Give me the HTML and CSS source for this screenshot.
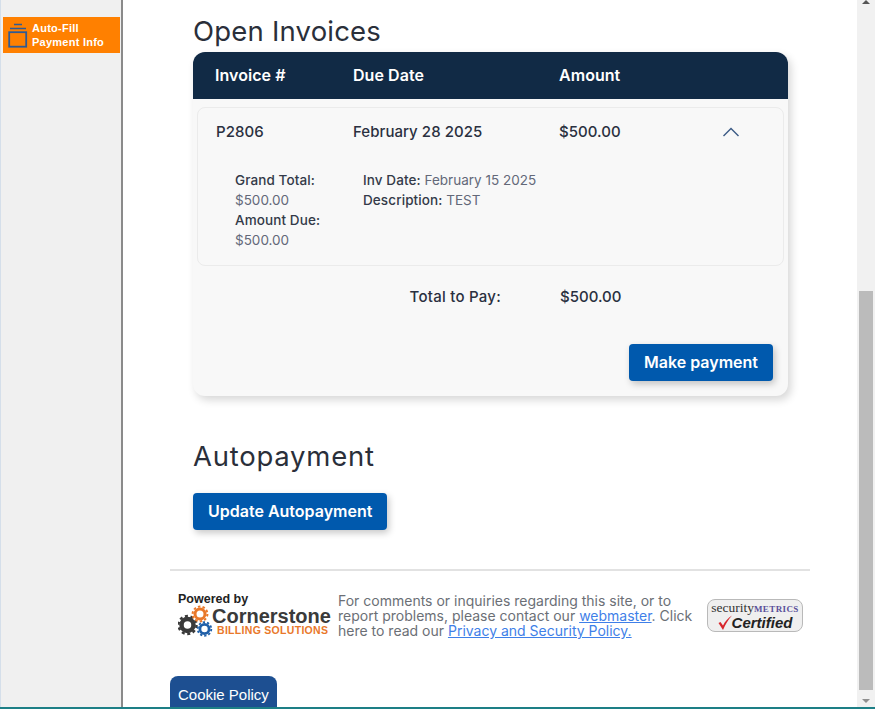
FILE: index.html
```html
<!DOCTYPE html>
<html lang="en">
<head>
    <meta charset="UTF-8">
    <meta name="viewport" content="width=device-width, initial-scale=1.0">
    <title>Open Invoices</title>
    <link rel="stylesheet" href="styles.css">
</head>
<body>
    <div class="window">
        <!-- Auto-fill side panel -->
        <aside class="sidebar">
            <div class="autofill">
                <svg class="autofill-icon" width="20" height="25" viewBox="0 0 20 25">
                    <path d="M6 1.5h8M2 5.5h16" stroke="#2f5a94" stroke-width="1.6" fill="none"/>
                    <rect x="1.2" y="9.2" width="17" height="14.5" stroke="#2f5a94" stroke-width="1.8" fill="none"/>
                </svg>
                <span>Auto-Fill<br>Payment Info</span>
            </div>
        </aside>

        <main class="content">
            <div class="section">
                <h2>Open Invoices</h2>
                <div class="invoice-card">
                    <div class="invoice-head row">
                        <div class="col-id">Invoice #</div>
                        <div class="col-date">Due Date</div>
                        <div class="col-amount">Amount</div>
                    </div>
                    <div class="invoice-item">
                        <div class="row item-row">
                            <div class="col-id">P2806</div>
                            <div class="col-date">February 28 2025</div>
                            <div class="col-amount">$500.00</div>
                            <svg class="chevron" width="18" height="10" viewBox="0 0 18 10">
                                <path d="M1.5 9L9 1.5L16.5 9" stroke="#3b5a85" stroke-width="1.4" fill="none"/>
                            </svg>
                        </div>
                        <div class="item-details">
                            <div class="details-left">
                                <b>Grand Total:</b>
                                <span>$500.00</span>
                                <b>Amount Due:</b>
                                <span>$500.00</span>
                            </div>
                            <div class="details-right">
                                <div><b>Inv Date:</b> <span>February 15 2025</span></div>
                                <div><b>Description:</b> <span>TEST</span></div>
                            </div>
                        </div>
                    </div>
                    <div class="total-row">
                        <div class="total-label">Total to Pay:</div>
                        <div class="total-value">$500.00</div>
                    </div>
                    <div class="card-actions">
                        <button class="btn" type="button">Make payment</button>
                    </div>
                </div>

                <h2 class="autopay-title">Autopayment</h2>
                <button class="btn" type="button">Update Autopayment</button>
            </div>

            <footer class="footer">
                <div class="powered">
                    <div class="powered-by">Powered by</div>
                    <div class="logo">
                        <svg width="51" height="34" viewBox="0 0 51 34">
                            <circle cx="9.5" cy="21" r="6" fill="none" stroke="#3a3a3a" stroke-width="4.5"/>
                            <circle cx="9.5" cy="21" r="9" fill="none" stroke="#3a3a3a" stroke-width="2.4" stroke-dasharray="3 2.65"/>
                            <circle cx="22" cy="10" r="5" fill="none" stroke="#e9782a" stroke-width="3"/>
                            <circle cx="22" cy="10" r="7.4" fill="none" stroke="#e9782a" stroke-width="2" stroke-dasharray="2.5 2.15"/>
                            <circle cx="26.5" cy="25" r="4.6" fill="none" stroke="#1f5fa8" stroke-width="2.8"/>
                            <circle cx="26.5" cy="25" r="6.8" fill="none" stroke="#1f5fa8" stroke-width="1.8" stroke-dasharray="2.3 2"/>
                        </svg>
                        <div class="logo-text">
                            <div class="logo-name">Cornerstone</div>
                            <div class="logo-sub">BILLING SOLUTIONS</div>
                        </div>
                    </div>
                </div>
                <p class="footer-text">For comments or inquiries regarding this site, or to report problems, please contact our <a href="#">webmaster</a>. Click here to read our <a href="#">Privacy and Security Policy.</a></p>
                <div class="badge">
                    <div class="badge-top">security<span>METRICS</span></div>
                    <div class="badge-bottom">
                        <svg width="14" height="15" viewBox="0 0 14 15">
                            <path d="M0.5 8L2.5 7L5 10.5C7 6.5 10 3 14 0.5C10.5 4.5 7.5 9 5 15Z" fill="#d8262c"/>
                        </svg>
                        <span>Certified</span>
                    </div>
                </div>
            </footer>

            <div class="cookie">Cookie Policy</div>
        </main>

        <!-- Page scrollbar -->
        <div class="scrollbar">
            <div class="arrow-up"></div>
            <div class="scroll-track">
                <div class="scroll-thumb"></div>
            </div>
            <div class="arrow-down"></div>
        </div>
    </div>
</body>
</html>
```

FILE: styles.css
```css
* {
    box-sizing: border-box;
}

html, body {
    height: 100%;
}

body {
    margin: 0;
    font-family: Inter, "Open Sans", sans-serif;
    background-color: #fff;
    color: #2c3240;
    overflow: hidden;
}

.window {
    display: flex;
    height: 709px;
    border-bottom: 2px solid #1d7f86;
    overflow: hidden;
}

.sidebar {
    width: 123px;
    flex-shrink: 0;
    padding: 17px 0 0 3px;
    background-color: #f0f0f0;
    border-left: 1px solid #d5dfea;
    border-right: 2px solid #8a8a8a;
}

.autofill {
    display: flex;
    align-items: center;
    gap: 4px;
    width: 117px;
    height: 36px;
    margin-left: -1px;
    padding-left: 5px;
    background-color: #ff8000;
    color: #fff;
    font-family: "Liberation Sans", Arial, sans-serif;
    font-size: 11px;
    font-weight: bold;
    line-height: 14.5px;
    letter-spacing: 0.25px;
}

.autofill-icon {
    flex-shrink: 0;
    margin-top: 1px;
}

.content {
    flex: 1;
    min-width: 0;
    padding-left: 47px;
}

.section {
    padding: 0 0 0 23px;
    width: 618px;
}

h2 {
    margin: 0;
    padding-top: 15px;
    height: 52px;
    font-size: 27.5px;
    line-height: 32px;
    font-weight: 400;
    color: #2a2f3a;
    letter-spacing: 0.2px;
}

.invoice-card {
    width: 595px;
    height: 344px;
    background-color: #f8f8f8;
    border-radius: 12px;
    box-shadow: 3px 4px 9px rgba(0, 0, 0, 0.16);
}

.row {
    display: flex;
    align-items: center;
}

.invoice-head {
    height: 47px;
    padding: 0 0 2px 22px;
    background-color: #112a45;
    border-radius: 12px 12px 0 0;
    color: #fff;
    font-size: 16px;
    font-weight: 600;
    letter-spacing: 0.05px;
}

.col-id {
    width: 138px;
}

.col-date {
    width: 206px;
}

.col-amount {
    width: 162px;
}

.invoice-item {
    height: 159px;
    margin: 8px 4px 0;
    background-color: #f8f8f8;
    border: 1px solid #ebebeb;
    border-radius: 8px;
}

.item-row {
    height: 47px;
    padding-left: 18px;
    font-size: 15px;
    font-weight: 500;
    color: #2a3040;
    letter-spacing: 0.05px;
}

.item-row .col-id {
    width: 137px;
}

.item-row .col-amount {
    width: 163px;
}

.item-details {
    display: flex;
    padding: 15px 0 0 37px;
    font-size: 13.5px;
    line-height: 20px;
}

.details-left {
    display: flex;
    flex-direction: column;
    width: 128px;
}

.item-details b {
    font-weight: 500;
    color: #333a48;
    letter-spacing: 0.1px;
}

.item-details span {
    color: #636878;
}

.total-row {
    display: flex;
    height: 60px;
    align-items: center;
    font-size: 15px;
    font-weight: 500;
    color: #2a3040;
}

.total-label {
    width: 308px;
    text-align: right;
    letter-spacing: 0.25px;
}

.total-value {
    margin-left: 59px;
}

.card-actions {
    display: flex;
    justify-content: flex-end;
    padding: 18px 15px 0 0;
}

.btn {
    height: 37px;
    padding: 0 15px 2px;
    border: none;
    border-radius: 4px;
    background-color: #0059ad;
    color: #fff;
    font-family: Inter, sans-serif;
    font-size: 16px;
    font-weight: 600;
    box-shadow: 2px 3px 7px rgba(0, 0, 0, 0.22);
    cursor: pointer;
}

.autopay-title {
    margin-top: 22px;
    height: 75px;
    padding-top: 22px;
    letter-spacing: 0.75px;
}

.footer {
    display: flex;
    align-items: flex-start;
    width: 640px;
    height: 107px;
    margin-top: 39px;
    padding: 22px 0 0 8px;
    border-top: 2px solid #e2e2e2;
}

.powered {
    width: 160px;
    flex-shrink: 0;
}

.powered-by {
    font-family: "Liberation Sans", Arial, sans-serif;
    font-size: 12.5px;
    font-weight: bold;
    line-height: 12px;
    color: #222;
}

.logo {
    display: flex;
    margin-top: -1px;
}

.logo svg {
    flex-shrink: 0;
}

.logo-text {
    margin-left: -17px;
    padding-top: 3px;
}

.logo-name {
    font-family: "Liberation Sans", Arial, sans-serif;
    font-size: 20px;
    font-weight: bold;
    line-height: 18px;
    color: #3a3a3a;
}

.logo-sub {
    margin-left: 5px;
    font-family: "Liberation Sans", Arial, sans-serif;
    font-size: 10.5px;
    font-weight: bold;
    line-height: 11px;
    color: #e9782a;
    letter-spacing: 0.3px;
}

.footer-text {
    width: 360px;
    margin: 0;
    font-size: 14px;
    line-height: 15px;
    color: #6b6f76;
}

.footer-text a {
    color: #3f7fe8;
}

.badge {
    width: 96px;
    height: 33px;
    margin: 6px 0 0 9px;
    padding-top: 2px;
    background-color: #efefef;
    border: 1px solid #b9b9b9;
    border-radius: 8px;
    text-align: center;
}

.badge-top {
    font-family: "Liberation Serif", serif;
    font-size: 13.5px;
    line-height: 12px;
    color: #333;
    white-space: nowrap;
}

.badge-top span {
    font-size: 9px;
    font-weight: bold;
    letter-spacing: 0.4px;
    color: #5a4f9a;
}

.badge-bottom {
    display: flex;
    justify-content: center;
    align-items: center;
    height: 15px;
    gap: 0;
    font-family: "Liberation Sans", Arial, sans-serif;
    font-size: 15px;
    font-weight: bold;
    font-style: italic;
    color: #222;
}

.cookie {
    width: 107px;
    height: 40px;
    padding: 9px 0 0 8px;
    background-color: #1d4f91;
    border-radius: 8px 8px 0 0;
    color: #fff;
    font-family: "Liberation Sans", Arial, sans-serif;
    font-size: 15px;
    line-height: 20px;
}

.scrollbar {
    display: flex;
    flex-direction: column;
    align-items: center;
    width: 18px;
    flex-shrink: 0;
    background-color: #f1f1f1;
}

.scroll-track {
    flex: 1;
    width: 100%;
    padding: 287px 2px 0;
}

.scroll-thumb {
    height: 399px;
    background-color: #bbb;
}

.arrow-up, .arrow-down {
    width: 0;
    height: 0;
    border-left: 4px solid transparent;
    border-right: 4px solid transparent;
}

.arrow-up {
    margin-top: 0;
    border-bottom: 4px solid #555;
}

.arrow-down {
    margin: 4px 0 4px;
    border-top: 4px solid #8f8f8f;
}
```
